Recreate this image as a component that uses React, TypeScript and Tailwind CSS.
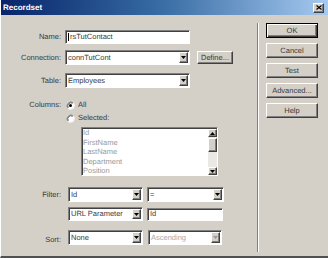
import React from "react";

const sunken =
  "bg-white border border-t-[#808080] border-l-[#808080] border-r-white border-b-white shadow-[inset_1px_1px_0_#404040]";
const raised =
  "bg-[#d4d0c8] border border-t-white border-l-white border-r-[#404040] border-b-[#404040] shadow-[inset_-1px_-1px_0_#808080]";

function Tri({ up, color = "#000" }: { up?: boolean; color?: string }) {
  return (
    <svg width="5" height="3" viewBox="0 0 5 3">
      <path d={up ? "M0 3h5L2.5 0z" : "M0 0h5L2.5 3z"} fill={color} />
    </svg>
  );
}

function ArrowBtn({ disabled }: { disabled?: boolean }) {
  return (
    <div className={`${raised} w-[9px] my-[1px] mr-[1px] flex items-center justify-center`}>
      <Tri color={disabled ? "#9a9a9a" : "#000"} />
    </div>
  );
}

function Select({ cls, text, disabled }: { cls: string; text: string; disabled?: boolean }) {
  return (
    <div className={`${sunken} ${cls} flex items-stretch`}>
      <div
        className={`flex-1 flex items-center pl-[2px] text-[7.5px] leading-none ${
          disabled ? "text-[#a8a8a8]" : "text-[#3a3a3a]"
        }`}
      >
        {text}
      </div>
      <ArrowBtn disabled={disabled} />
    </div>
  );
}

function Radio({ checked }: { checked?: boolean }) {
  return (
    <svg width="9" height="9" viewBox="0 0 9 9">
      <circle cx="4.5" cy="4.5" r="4" fill="#fff" />
      <path d="M1.7 7.3A4 4 0 0 1 7.3 1.7" fill="none" stroke="#808080" strokeWidth="1" />
      <path d="M2.4 6.6A3 3 0 0 1 6.6 2.4" fill="none" stroke="#404040" strokeWidth="0.8" />
      <path d="M7.3 1.7A4 4 0 0 1 1.7 7.3" fill="none" stroke="#f4f4f4" strokeWidth="1" />
      {checked && <circle cx="4.5" cy="4.5" r="1.5" fill="#000" />}
    </svg>
  );
}

function Btn({ label, def }: { label: string; def?: boolean }) {
  const cls = def
    ? "bg-[#d4d0c8] border border-black shadow-[inset_1px_1px_0_#fff,inset_-1px_-1px_0_#404040,inset_-2px_-2px_0_#808080]"
    : raised;
  return (
    <div className={`${cls} w-[52px] h-[15px] flex items-center justify-center text-[7.5px] leading-none text-[#3a3a3a]`}>
      {label}
    </div>
  );
}

function Label({ text, cls = "" }: { text: string; cls?: string }) {
  return <div className={`w-[60px] text-right text-[7.5px] leading-none text-[#3a3a3a] ${cls}`}>{text}</div>;
}

export default function App() {
  const items = ["Id", "FirstName", "LastName", "Department", "Position"];
  return (
    <div className="w-[328px] h-[258px] flex flex-col bg-[#d4d0c8] border-l border-l-white border-b-2 border-b-[#505050] overflow-hidden font-['Liberation_Sans',Arial,sans-serif] [text-rendering:geometricPrecision]">
      {/* title bar */}
      <div className="h-[15px] flex items-center bg-gradient-to-r from-[#0a246a] via-[#3a6ea5] to-[#a6caf0] pl-[2px] pr-[4px]">
        <div className="flex-1 text-white font-bold text-[8px] leading-none">Recordset</div>
        <div className={`${raised} w-[11px] h-[10px] flex items-center justify-center`}>
          <svg width="6" height="5" viewBox="0 0 6 5">
            <path d="M0.5 0.5L5.5 4.5M5.5 0.5L0.5 4.5" stroke="#000" strokeWidth="1.2" />
          </svg>
        </div>
      </div>

      <div className="flex flex-1">
        {/* form */}
        <div className="w-[256px] flex flex-col pt-[15px]">
          <div className="flex items-center h-[14px]">
            <Label text="Name:" />
            <div className={`${sunken} ml-[4px] w-[125px] h-[14px] flex items-center pl-[2px] text-[7.5px] leading-none text-[#3a3a3a]`}>
              <span className="w-px h-[8px] bg-black mr-px" />
              rsTutContact
            </div>
          </div>
          <div className="flex items-center h-[15px] mt-[6px]">
            <Label text="Connection:" />
            <Select cls="ml-[4px] w-[125px] h-[15px]" text="connTutCont" />
            <div className={`${raised} ml-[7px] w-[36px] h-[13px] flex items-center justify-center text-[7.5px] leading-none text-[#3a3a3a]`}>
              Define...
            </div>
          </div>
          <div className="flex items-center h-[15px] mt-[8px]">
            <Label text="Table:" />
            <Select cls="ml-[4px] w-[125px] h-[15px]" text="Employees" />
          </div>
          <div className="flex items-center h-[10px] mt-[12px]">
            <Label text="Columns:" />
            <div className="ml-[5px] flex items-center">
              <Radio checked />
            </div>
            <span className="ml-[3px] text-[7.5px] leading-none text-[#3a3a3a]">All</span>
          </div>
          <div className="flex items-center h-[10px] mt-[3px] pl-[65px]">
            <Radio />
            <span className="ml-[3px] text-[7.5px] leading-none text-[#3a3a3a]">Selected:</span>
          </div>
          <div className={`${sunken} mt-[4px] ml-[80px] w-[137px] h-[49px] flex`}>
            <div className="flex-1 pl-[1px] flex flex-col text-[7.5px] leading-[9.5px] text-[#999999]">
              {items.map((t) => (
                <div key={t}>{t}</div>
              ))}
            </div>
            <div className="w-[9px] mt-[1px] flex flex-col bg-[#ebe9e5]">
              <div className={`${raised} h-[8px] flex items-center justify-center`}>
                <Tri up />
              </div>
              <div className={`${raised} h-[14px] mt-px`} />
              <div className="flex-1" />
              <div className={`${raised} h-[8px] flex items-center justify-center`}>
                <Tri />
              </div>
            </div>
          </div>
          <div className="flex items-center h-[15px] mt-[11px]">
            <Label text="Filter:" />
            <Select cls="ml-[7px] w-[75px] h-[15px]" text="Id" />
            <Select cls="ml-[4px] w-[77px] h-[15px]" text="=" />
          </div>
          <div className="flex items-center h-[14px] mt-[5px] pl-[67px]">
            <Select cls="w-[75px] h-[14px]" text="URL Parameter" />
            <div className={`${sunken} ml-[4px] w-[76px] h-[13px] flex items-center pl-[2px] text-[7.5px] leading-none text-[#3a3a3a]`}>
              Id
            </div>
          </div>
          <div className="flex items-start h-[15px] mt-[9px]">
            <Label text="Sort:" cls="mt-[6px]" />
            <Select cls="ml-[7px] w-[75px] h-[15px]" text="None" />
            <Select cls="ml-[5px] w-[74px] h-[15px]" text="Ascending" disabled />
          </div>
        </div>

        {/* separator */}
        <div className="w-[2px] border-l border-l-[#808080] border-r border-r-white mt-[8px] mb-[4px]" />

        {/* buttons */}
        <div className="pl-[7px] pt-[8px] flex flex-col gap-[5px]">
          <Btn label="OK" def />
          <Btn label="Cancel" />
          <Btn label="Test" />
          <Btn label="Advanced..." />
          <Btn label="Help" />
        </div>
      </div>
    </div>
  );
}
